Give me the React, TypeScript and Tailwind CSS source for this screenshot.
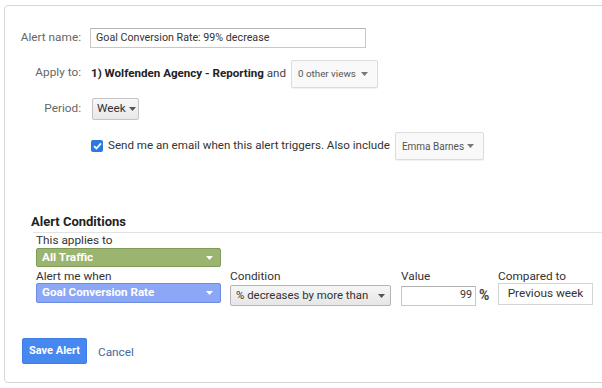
import React from "react";

const Caret = ({ color = "#555" }: { color?: string }) => (
  <svg width="7" height="4" viewBox="0 0 7 4" className="shrink-0">
    <polygon points="0,0 7,0 3.5,4" fill={color} />
  </svg>
);

export default function App() {
  return (
    <div
      className="w-[602px] h-[388px] overflow-hidden bg-white text-[#333]"
      style={{ fontFamily: "Roboto, 'Liberation Sans', Arial, sans-serif" }}
    >
      <div className="ml-[4px] mt-[5px] w-[640px] h-[378px] border border-[#d6d6d6] rounded-l-[4px]">
        {/* Alert name */}
        <div className="flex items-center mt-[22px] h-[20px]">
          <div className="w-[76px] text-right text-[11.8px] text-[#666] whitespace-nowrap">Alert name:</div>
          <div className="ml-[9px] w-[276px] h-[20px] border border-[#c8c8c8] border-t-[#b5b5b5] flex items-center pl-[5px] text-[10.7px] text-[#333] whitespace-nowrap">
            Goal Conversion Rate: 99% decrease
          </div>
        </div>

        {/* Apply to */}
        <div className="flex items-center mt-[12px] h-[28px]">
          <div className="w-[76px] text-right text-[11.8px] text-[#666] -mt-[3px] whitespace-nowrap">Apply to:</div>
          <div className="ml-[10px] text-[11.6px] text-[#222] whitespace-nowrap">
            <span className="font-bold">1) Wolfenden Agency - Reporting</span>{" "}
            <span className="text-[#444]">and</span>
          </div>
          <div className="ml-[5px] w-[87px] h-[28px] border border-[#dcdcdc] rounded-[2px] bg-[#f9f9f9] shadow-[0_1px_1px_rgba(0,0,0,0.06)] flex items-center justify-between pl-[6px] pr-[9px] text-[9.8px] text-[#555] whitespace-nowrap">
            <span>0 other views</span>
            <Caret color="#777" />
          </div>
        </div>

        {/* Period */}
        <div className="flex items-center mt-[10px] h-[22px]">
          <div className="w-[76px] text-right text-[11.8px] text-[#666] whitespace-nowrap">Period:</div>
          <div className="ml-[11px] w-[47px] h-[22px] border border-[#c4c4c4] rounded-[2px] bg-gradient-to-b from-[#f8f8f8] to-[#e8e8e8] flex items-center pl-[4px] gap-[3px] text-[11.8px] text-[#333] whitespace-nowrap">
            <span>Week</span>
            <Caret color="#555" />
          </div>
        </div>

        {/* Email */}
        <div className="flex items-center mt-[12px] h-[28px]">
          <div className="w-[76px]" />
          <div className="ml-[10px] w-[12px] h-[12px] rounded-[2px] bg-[#2a78e0] flex items-center justify-center">
            <svg width="9" height="8" viewBox="0 0 9 8">
              <path d="M1 4.2 L3.4 6.5 L8 1.3" stroke="white" strokeWidth="1.8" fill="none" />
            </svg>
          </div>
          <div className="ml-[5px] text-[11.6px] text-[#333] whitespace-nowrap">
            Send me an email when this alert triggers. Also include
          </div>
          <div className="ml-[5px] w-[89px] h-[28px] border border-[#dcdcdc] rounded-[2px] bg-[#f9f9f9] shadow-[0_1px_1px_rgba(0,0,0,0.06)] flex items-center justify-between pl-[6px] pr-[9px] text-[10px] text-[#555] whitespace-nowrap">
            <span>Emma Barnes</span>
            <Caret color="#777" />
          </div>
        </div>

        {/* Alert Conditions */}
        <div className="ml-[26px] mt-[54px] text-[13px] font-bold text-[#222] leading-[16px]">
          Alert Conditions
        </div>
        <div className="ml-[28px] mt-[2px] border-t border-[#e2e2e2]" />
        <div className="ml-[31px] text-[11.8px] text-[#333] leading-[14px]">This applies to</div>
        <div className="ml-[31px] mt-[1px] w-[185px] h-[19px] rounded-[2px] bg-[#9bb46f] border border-[#809b58] flex items-center justify-between pl-[5px] pr-[7px] text-[11.8px] font-bold text-white whitespace-nowrap">
          <span>All Traffic</span>
          <Caret color="#fff" />
        </div>

        <div className="ml-[31px] mt-[2px] flex">
          <div className="w-[194px]">
            <div className="text-[11.8px] text-[#333] leading-[14px]">Alert me when</div>
            <div className="w-[185px] h-[20px] rounded-[2px] bg-[#8ba7f6] border border-[#6d8be0] flex items-center justify-between pl-[5px] pr-[7px] text-[11.6px] font-bold text-white whitespace-nowrap">
              <span>Goal Conversion Rate</span>
              <Caret color="#fff" />
            </div>
          </div>
          <div className="w-[171px]">
            <div className="text-[11.8px] text-[#333] leading-[14px]">Condition</div>
            <div className="mt-[2px] w-[161px] h-[21px] rounded-[2px] bg-gradient-to-b from-[#f6f6f6] to-[#e6e6e6] border border-[#b4b4b4] flex items-center justify-between pl-[5px] pr-[5px] text-[11.4px] text-[#333] whitespace-nowrap">
              <span>% decreases by more than</span>
              <Caret color="#555" />
            </div>
          </div>
          <div className="w-[97px]">
            <div className="text-[11.8px] text-[#333] leading-[14px]">Value</div>
            <div className="mt-[2px] flex items-center">
              <div className="w-[75px] h-[20px] border border-[#c8c8c8] border-t-[#b0b0b0] flex items-center justify-end pr-[3px] text-[10.7px] text-[#333]">
                99
              </div>
              <span className="ml-[3px] text-[14px] font-bold text-[#444]">%</span>
            </div>
          </div>
          <div>
            <div className="text-[11.8px] text-[#333] leading-[14px]">Compared to</div>
            <div className="w-[95px] h-[22px] border border-[#d4d4d4] flex items-center justify-center text-[11.8px] text-[#333] whitespace-nowrap">
              Previous week
            </div>
          </div>
        </div>

        {/* Buttons */}
        <div className="flex items-center ml-[17px] mt-[32px]">
          <div className="w-[65px] h-[26px] rounded-[2px] bg-[#4787f0] border border-[#3f7ce6] flex items-center justify-center text-[11px] font-bold text-white">
            Save Alert
          </div>
          <div className="ml-[11px] mt-[3px] text-[11.8px] text-[#46699e]">Cancel</div>
        </div>
      </div>
    </div>
  );
}
